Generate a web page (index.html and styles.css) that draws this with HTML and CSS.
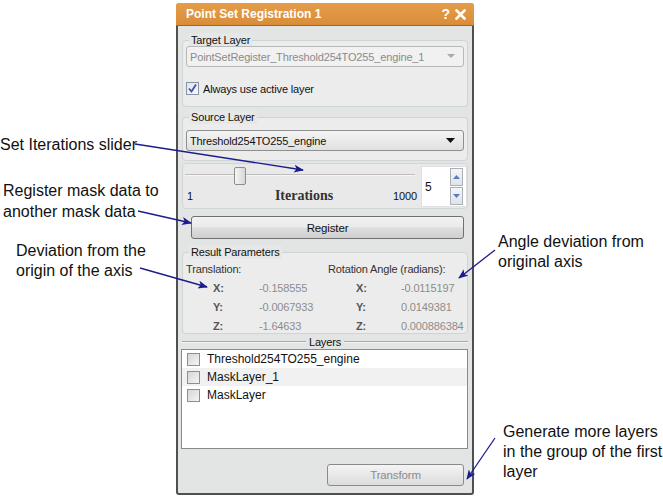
FILE: index.html
```html
<!DOCTYPE html>
<html>
<head>
<meta charset="utf-8">
<link rel="stylesheet" href="styles.css">
</head>
<body>
<div class="page">
  <div class="notes-left">
    <div class="note n1">Set Iterations slider</div>
    <div class="note n2">Register mask data to<br>another mask data</div>
    <div class="note n3">Deviation from the<br>origin of the axis</div>
  </div>

  <div class="panel">
    <div class="titlebar">
      <span class="title">Point Set Registration 1</span>
      <span class="title-btns">
        <span class="qmark">?</span>
        <svg class="xicon" width="11" height="11" viewBox="0 0 11 11"><path d="M1.5 1.5 L9.5 9.5 M9.5 1.5 L1.5 9.5" stroke="#fff" stroke-width="2.6" stroke-linecap="square"/></svg>
      </span>
    </div>
    <div class="content">
      <div class="group target">
        <div class="legend">Target Layer</div>
        <div class="combo disabled">
          <span>PointSetRegister_Threshold254TO255_engine_1</span>
          <svg width="8" height="5" viewBox="0 0 8 5"><path d="M0 0 L8 0 L4 4 Z" fill="#a9a9a9"/></svg>
        </div>
        <div class="checkrow">
          <span class="cbox checked">
            <svg width="11" height="11" viewBox="0 0 11 11"><path d="M2 5.5 L4.5 8.5 L9 1.5" fill="none" stroke="#3b55a8" stroke-width="1.8"/></svg>
          </span>
          <span>Always use active layer</span>
        </div>
      </div>

      <div class="group source">
        <div class="legend">Source Layer</div>
        <div class="combo">
          <span>Threshold254TO255_engine</span>
          <svg width="9" height="5" viewBox="0 0 9 5"><path d="M0 0 L9 0 L4.5 5 Z" fill="#111"/></svg>
        </div>
      </div>

      <div class="sliderbox">
        <div class="slider-col">
          <div class="track"><div class="groove"></div><div class="handle"></div></div>
          <div class="slider-labels">
            <span>1</span>
            <span class="iter">Iterations</span>
            <span>1000</span>
          </div>
        </div>
        <div class="spin">
          <span class="spin-val">5</span>
          <div class="spin-btns">
            <div class="sbtn"><svg width="7" height="4" viewBox="0 0 7 4"><path d="M0 4 L7 4 L3.5 0 Z" fill="#5a7bc4"/></svg></div>
            <div class="sbtn"><svg width="7" height="4" viewBox="0 0 7 4"><path d="M0 0 L7 0 L3.5 4 Z" fill="#5a7bc4"/></svg></div>
          </div>
        </div>
      </div>

      <div class="btnrow"><div class="button register">Register</div></div>

      <div class="group results">
        <div class="legend">Result Parameters</div>
        <div class="res-head"><span class="trans">Translation:</span><span>Rotation Angle (radians):</span></div>
        <div class="res-grid">
          <span class="ax">X:</span><span class="val">-0.158555</span><span class="ax">X:</span><span class="val">-0.0115197</span>
          <span class="ax">Y:</span><span class="val">-0.0067933</span><span class="ax">Y:</span><span class="val">0.0149381</span>
          <span class="ax">Z:</span><span class="val">-1.64633</span><span class="ax">Z:</span><span class="val">0.000886384</span>
        </div>
      </div>

      <div class="layers-head"><span class="line"></span><span class="lh-text">Layers</span><span class="line"></span></div>
      <div class="listbox">
        <div class="item"><span class="cbox"></span><span>Threshold254TO255_engine</span></div>
        <div class="item alt"><span class="cbox"></span><span>MaskLayer_1</span></div>
        <div class="item"><span class="cbox"></span><span>MaskLayer</span></div>
      </div>

      <div class="btnrow right"><div class="button transform">Transform</div></div>
    </div>
  </div>

  <div class="notes-right">
    <div class="note n4">Angle deviation from<br>original axis</div>
    <div class="note n5">Generate more layers<br>in the group of the first<br>layer</div>
  </div>
</div>

<svg class="arrows" width="663" height="499" viewBox="0 0 663 499">
  <defs>
    <marker id="ah" markerWidth="10" markerHeight="8" refX="9" refY="4" orient="auto" markerUnits="userSpaceOnUse">
      <path d="M0 0 L10 4 L0 8 L2.5 4 Z" fill="#1c1c8c"/>
    </marker>
  </defs>
  <g stroke="#1c1c8c" stroke-width="1.3" fill="none">
    <line x1="135" y1="144" x2="303" y2="170" marker-end="url(#ah)"/>
    <line x1="138" y1="211" x2="191" y2="223" marker-end="url(#ah)"/>
    <line x1="140" y1="268" x2="207" y2="287" marker-end="url(#ah)"/>
    <line x1="495" y1="250" x2="459" y2="278" marker-end="url(#ah)"/>
    <line x1="495" y1="438" x2="467" y2="479" marker-end="url(#ah)"/>
  </g>
</svg>
</body>
</html>
```

FILE: styles.css
```css
html, body {
  margin: 0;
  padding: 0;
}
body {
  width: 663px;
  height: 499px;
  background: #ffffff;
  position: relative;
  overflow: hidden;
  font-family: "Liberation Sans", Arial, sans-serif;
}
.page {
  display: flex;
  align-items: flex-start;
}
.notes-left {
  width: 176px;
  flex: none;
}
.notes-right {
  flex: 1;
}
.note {
  font-size: 16px;
  color: #111;
  line-height: 20px;
  white-space: nowrap;
}
.n1 { margin-top: 135px; padding-left: 0; }
.n2 { margin-top: 25px; padding-left: 3px; line-height: 21px; }
.n3 { margin-top: 19px; padding-left: 16px; }
.n4 { margin-top: 232px; padding-left: 24px; }
.n5 { margin-top: 150px; padding-left: 29px; }

.arrows {
  position: absolute;
  left: 0;
  top: 0;
  pointer-events: none;
}

/* panel */
.panel {
  width: 294px;
  height: 490px;
  margin-top: 3px;
  border: 2px solid #505050;
  border-top: none;
  border-radius: 4px 4px 3px 3px;
  background: #e3e4e4;
  font-size: 11px;
  letter-spacing: -0.15px;
  color: #111;
  flex: none;
}
.titlebar {
  height: 23px;
  background: linear-gradient(#e59d4a, #d98d38);
  border-radius: 3px 3px 0 0;
  margin: 0 -2px;
  border-bottom: 1px solid #9a6a2a;
  display: flex;
  align-items: center;
  justify-content: space-between;
  padding: 0 8px 0 10px;
  color: #fff;
  font-weight: bold;
  font-size: 12px;
  letter-spacing: 0;
  box-sizing: border-box;
}
.title-btns {
  display: flex;
  align-items: center;
  gap: 5px;
}
.qmark {
  font-size: 14px;
  font-weight: bold;
}
.content {
  padding: 0 4px;
  display: flex;
  flex-direction: column;
}

/* group boxes */
.group {
  box-sizing: border-box;
  border: 1px solid #cfd4d9;
  border-radius: 4px;
  background: #ececec;
  padding: 0 3px;
}
.legend {
  width: fit-content;
  height: 14px;
  line-height: 14px;
  margin: -8px 0 -6px 3px;
  padding: 0 2px;
  background: #e6e7e7;
  color: #111;
}
.target {
  margin-top: 14px;
  height: 67px;
}
.combo {
  height: 21px;
  box-sizing: border-box;
  border: 1px solid #8e8f8f;
  border-radius: 3px;
  background: linear-gradient(#f4f4f4, #e0e0e0);
  display: flex;
  align-items: center;
  justify-content: space-between;
  padding: 0 8px 0 3px;
}
.target .combo {
  margin-top: 5px;
}
.combo.disabled {
  border-color: #b6b8ba;
  background: #f1f1f1;
  color: #8b8b8b;
}
.checkrow {
  display: flex;
  align-items: center;
  gap: 4px;
  margin-top: 15px;
  height: 13px;
}
.cbox {
  width: 11px;
  height: 11px;
  border: 1px solid #8f8f8f;
  background: linear-gradient(135deg, #d6d6d6, #f4f4f4);
  display: inline-flex;
  align-items: center;
  justify-content: center;
  flex: none;
}
.cbox.checked {
  background: linear-gradient(135deg, #dfe6ef, #f6f8fb);
  border-color: #8a93a3;
}

.source {
  margin-top: 10px;
  height: 44px;
}
.source .combo {
  margin-top: 12px;
}

/* slider */
.sliderbox {
  margin-top: 2px;
  height: 46px;
  box-sizing: border-box;
  border: 1px solid #d3d6d9;
  border-radius: 4px;
  background: #e9e9e9;
  display: flex;
  padding: 0 0 0 2px;
}
.slider-col {
  width: 232px;
  display: flex;
  flex-direction: column;
}
.track {
  position: relative;
  height: 25px;
}
.groove {
  position: absolute;
  left: 0;
  right: 2px;
  top: 10px;
  height: 1px;
  background: #bdbdbd;
  border-bottom: 1px solid #f6f6f6;
}
.handle {
  position: absolute;
  left: 49px;
  top: 3px;
  width: 10px;
  height: 16px;
  border: 1px solid #8e8e8e;
  border-radius: 2px;
  background: linear-gradient(90deg, #f6f6f6, #d6d6d6);
}
.slider-labels {
  display: flex;
  justify-content: space-between;
  align-items: center;
  height: 14px;
  padding: 0 0 0 2px;
}
.iter {
  font-family: "Liberation Serif", "Times New Roman", serif;
  font-weight: bold;
  font-size: 14px;
  letter-spacing: 0;
  color: #333;
  margin-left: 22px;
}
.spin {
  width: 46px;
  height: 41px;
  margin-left: 4px;
  margin-top: 2px;
  background: #fff;
  border: 1px solid #e0e0e0;
  display: flex;
  justify-content: space-between;
  box-sizing: border-box;
}
.spin-val {
  font-size: 12px;
  padding: 13px 0 0 3px;
  color: #111;
}
.spin-btns {
  display: flex;
  flex-direction: column;
  padding: 1px 3px 1px 0;
  gap: 1px;
}
.sbtn {
  width: 11px;
  flex: 1;
  border: 1px solid #aab0b8;
  background: linear-gradient(#f4f5f7, #dfe3e8);
  display: flex;
  align-items: center;
  justify-content: center;
}

/* buttons */
.btnrow {
  display: flex;
  padding-left: 9px;
  padding-right: 4px;
  margin-top: 7px;
}
.btnrow.right {
  justify-content: flex-end;
  margin-top: 15px;
}
.button {
  height: 23px;
  box-sizing: border-box;
  border: 1px solid #707070;
  border-radius: 3px;
  background: linear-gradient(#f2f2f2 0%, #ebebeb 45%, #dddddd 55%, #cfcfcf 100%);
  display: flex;
  align-items: center;
  justify-content: center;
  font-size: 11.5px;
}
.register {
  flex: 1;
}
.transform {
  width: 137px;
  height: 22px;
  color: #8a8a8a;
  border-color: #8a8a8a;
  background: linear-gradient(#f4f4f4, #dcdcdc);
}

/* results */
.results {
  margin-top: 13px;
  height: 82px;
  padding: 0 3px;
}
.res-head {
  display: flex;
  margin-top: 7px;
  height: 18px;
  align-items: center;
  color: #333;
}
.trans {
  width: 142px;
}
.res-grid {
  display: grid;
  grid-template-columns: 46px 97px 45px auto;
  grid-auto-rows: 19px;
  padding-left: 27px;
  align-items: center;
  color: #8c8c8c;
}
.ax {
  font-weight: bold;
  color: #555;
}

/* layers */
.layers-head {
  display: flex;
  align-items: center;
  margin-top: 1px;
  height: 14px;
  gap: 3px;
}
.layers-head .line {
  flex: 1;
  height: 1px;
  background: #a7a7a7;
  border-bottom: 1px solid #f5f5f5;
}
.listbox {
  height: 100px;
  box-sizing: border-box;
  border: 1px solid #8a8a8a;
  background: #fff;
  margin-left: -1px;
}
.item {
  height: 18px;
  display: flex;
  align-items: center;
  gap: 7px;
  padding-left: 5px;
  font-size: 12px;
  letter-spacing: 0;
  color: #111;
}
.item.alt {
  background: #f1f1f1;
}
```
